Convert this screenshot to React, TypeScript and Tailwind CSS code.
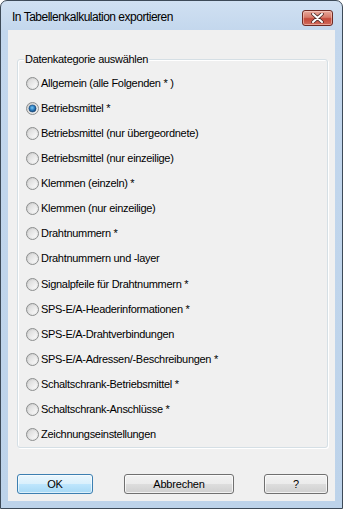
import React from "react";

const items: string[] = [
  "Allgemein (alle Folgenden * )",
  "Betriebsmittel *",
  "Betriebsmittel (nur übergeordnete)",
  "Betriebsmittel (nur einzeilige)",
  "Klemmen (einzeln) *",
  "Klemmen (nur einzeilige)",
  "Drahtnummern *",
  "Drahtnummern und -layer",
  "Signalpfeile für Drahtnummern *",
  "SPS-E/A-Headerinformationen *",
  "SPS-E/A-Drahtverbindungen",
  "SPS-E/A-Adressen/-Beschreibungen *",
  "Schaltschrank-Betriebsmittel *",
  "Schaltschrank-Anschlüsse *",
  "Zeichnungseinstellungen",
];

function Radio({ checked }: { checked: boolean }) {
  return (
    <svg width="13" height="13" viewBox="0 0 13 13" className="shrink-0">
      <defs>
        <linearGradient id="rgOuter" x1="0" y1="0" x2="1" y2="1">
          <stop offset="0" stopColor="#c9c9c9" />
          <stop offset="1" stopColor="#f6f6f6" />
        </linearGradient>
        <linearGradient id="rgInner" x1="0" y1="0" x2="1" y2="1">
          <stop offset="0" stopColor="#d8d8d8" />
          <stop offset="1" stopColor="#fbfbfb" />
        </linearGradient>
        <radialGradient id="rgDot" cx="0.45" cy="0.4" r="0.6">
          <stop offset="0" stopColor="#7cc8f2" />
          <stop offset="0.55" stopColor="#2a7cc0" />
          <stop offset="1" stopColor="#0f3d6e" />
        </radialGradient>
      </defs>
      <circle cx="6.5" cy="6.5" r="6" fill="url(#rgOuter)" stroke="#8c8e8e" strokeWidth="1" />
      <circle cx="6.5" cy="6.5" r="4.3" fill="url(#rgInner)" />
      {checked && <circle cx="6.5" cy="6.5" r="3.6" fill="url(#rgDot)" stroke="#1c4a78" strokeWidth="0.6" />}
    </svg>
  );
}

function Button({ label, width, isDefault }: { label: string; width: string; isDefault?: boolean }) {
  return (
    <div
      className={
        isDefault
          ? `${width} h-[20px] rounded-[3px] border border-[#3c7fb1] bg-[linear-gradient(#eaf6fd_0%,#d9f0fc_50%,#bee6fd_51%,#a7d9f5_100%)] flex items-center justify-center shadow-[inset_0_0_0_1px_rgba(255,255,255,0.6)]`
          : `${width} h-[20px] rounded-[3px] border border-[#707070] bg-[linear-gradient(#f2f2f2_0%,#ebebeb_50%,#dddddd_51%,#cfcfcf_100%)] flex items-center justify-center shadow-[inset_0_0_0_1px_rgba(255,255,255,0.7)]`
      }
    >
      <span className="text-[11px] tracking-[-0.2px] text-black leading-none">{label}</span>
    </div>
  );
}

export default function App() {
  return (
    <div className="w-[343px] h-[509px] bg-white" style={{ fontFamily: '"Liberation Sans", Arial, sans-serif' }}>
      <div className="w-[343px] h-[509px] rounded-t-[7px] border border-[#3d4a58] bg-[linear-gradient(#d0e0f2_0px,#c3d7ed_30px,#bdd3ea_100%)] flex flex-col">
        {/* Title bar */}
        <div className="h-[29px] flex items-start pl-[11px] pr-[9px] shrink-0">
          <span className="mt-[9px] text-[12px] tracking-[-0.5px] leading-[15px] text-black">
            In Tabellenkalkulation exportieren
          </span>
          <div className="ml-auto mt-[9px] w-[31px] h-[16px] rounded-[3px] border border-[#6e2a24] bg-[linear-gradient(#e8a99c_0%,#d77a6a_45%,#c4493a_55%,#d06b5c_100%)] flex items-center justify-center shadow-[inset_0_0_0_1px_rgba(255,220,210,0.5)]">
            <svg width="13" height="10" viewBox="0 0 13 10">
              <path d="M2 1 L11 9 M11 1 L2 9" stroke="#4a2a28" strokeWidth="3.6" strokeLinecap="round" />
              <path d="M2 1 L11 9 M11 1 L2 9" stroke="#ffffff" strokeWidth="2" strokeLinecap="round" />
            </svg>
          </div>
        </div>
        {/* Client area */}
        <div className="mx-[7px] w-[327px] h-[471px] bg-[#f0f0f0] flex flex-col shrink-0">
          <div className="ml-[9px] mt-[29px] w-[311px] h-[389px] rounded-[3px] border border-[#d5dfe5] shadow-[inset_1px_1px_0_#ffffff,1px_1px_0_#ffffff] relative flex flex-col pt-[11px]">
            <div className="absolute left-[6px] top-[-8px] px-[1px] bg-[#f0f0f0] text-[11px] tracking-[-0.3px] leading-[14px] text-black">
              Datenkategorie auswählen
            </div>
            {items.map((t, i) => (
              <div key={t} className="h-[25.14px] flex items-center pl-[8px] gap-[2px]">
                <Radio checked={i === 1} />
                <span className="text-[11px] tracking-[-0.3px] leading-[13px] text-black whitespace-nowrap">{t}</span>
              </div>
            ))}
          </div>
          <div className="flex ml-[9px] mt-[26px]">
            <Button label="OK" width="w-[76px]" isDefault />
            <div className="w-[31px]" />
            <Button label="Abbrechen" width="w-[110px]" />
            <div className="w-[30px]" />
            <Button label="?" width="w-[64px]" />
          </div>
        </div>
      </div>
    </div>
  );
}
